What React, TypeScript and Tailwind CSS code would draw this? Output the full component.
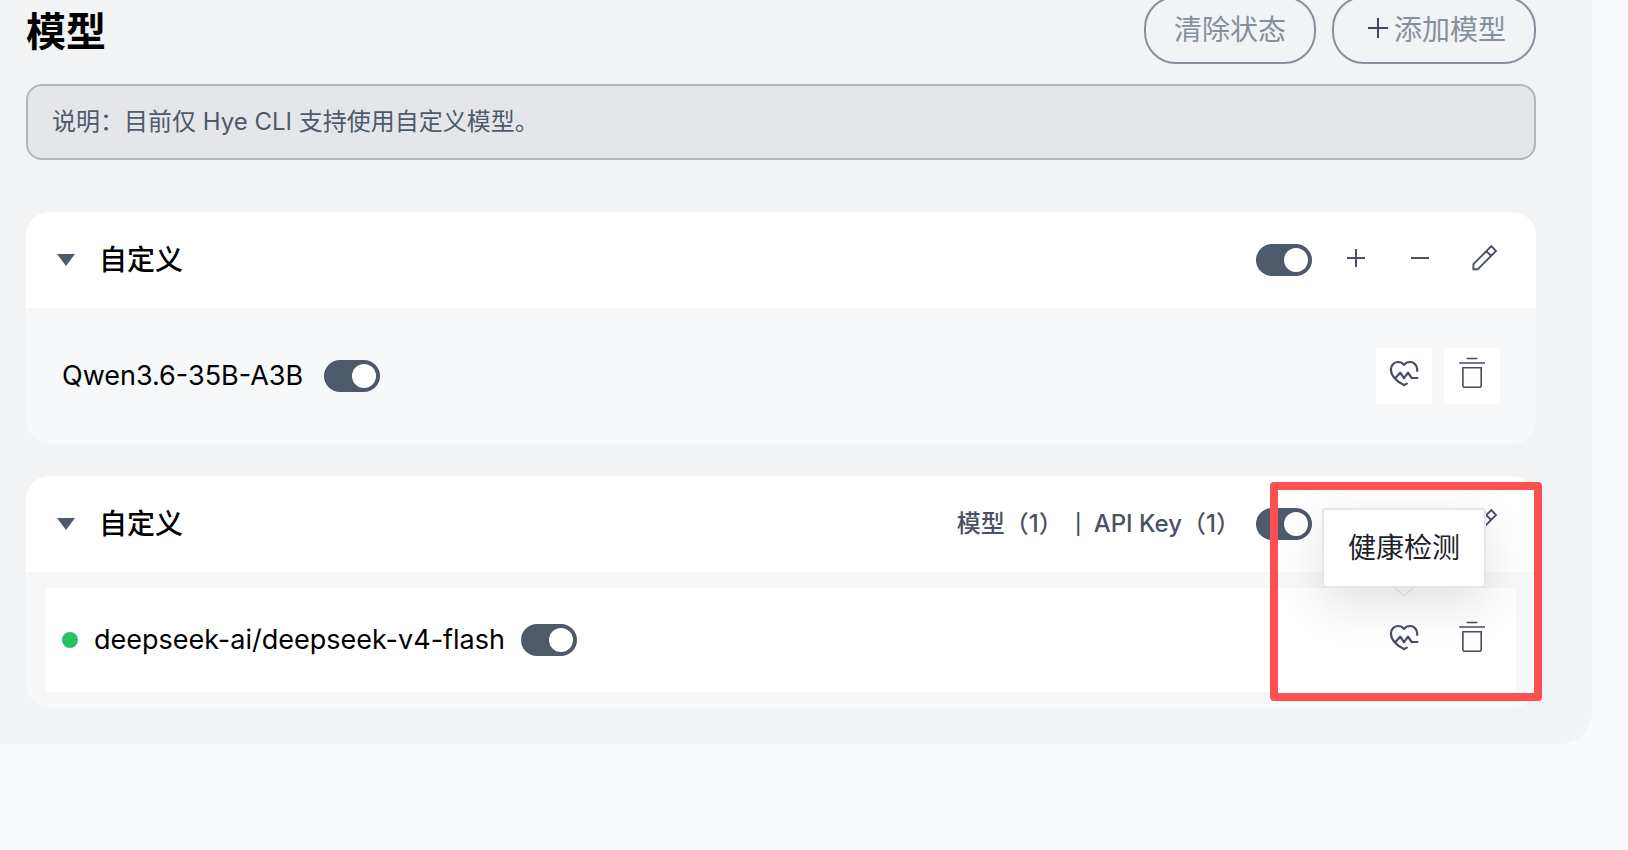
import { useState } from 'react';
import type { ReactNode } from 'react';

interface Model {
  id: string;
  name: string;
  healthy?: boolean;
}

interface Provider {
  id: string;
  title: string;
  keyCount?: number;
  models: Model[];
}

const providers: Provider[] = [
  {
    id: 'custom-1',
    title: '自定义',
    models: [{ id: 'qwen', name: 'Qwen3.6-35B-A3B' }],
  },
  {
    id: 'custom-2',
    title: '自定义',
    keyCount: 1,
    models: [{ id: 'deepseek', name: 'deepseek-ai/deepseek-v4-flash', healthy: true }],
  },
];

function Icon({ children, width = 2 }: { children: ReactNode; width?: number }) {
  return (
    <svg
      className="size-10 shrink-0"
      viewBox="-4 -4 40 40"
      fill="none"
      stroke="currentColor"
      strokeWidth={width}
      aria-hidden="true"
    >
      {children}
    </svg>
  );
}

function PlusIcon() {
  return (
    <Icon>
      <path d="M7 14h18M16 5v18" />
    </Icon>
  );
}

function MinusIcon() {
  return (
    <Icon>
      <path d="M7 14h18" />
    </Icon>
  );
}

function EditIcon() {
  return (
    <Icon width={1.9}>
      <path d="M23.3 2.2 28 7 9.7 25.3H5.4v-5.1zM18.3 7.1l4.9 4.9" />
    </Icon>
  );
}

function HealthIcon() {
  return (
    <Icon>
      <path
        d="M29.2 11V9.6C29.2 5.2 26 2 22.2 2 19.6 2 17.4 3 16 4.900 14.6 3 12.400 2 9.800 2 6 2 2.900 5.200 2.900 9.600c0 6.400 6.200 12.400 13.100 15.500 1.200-.4 2-.8 2.800-1.400"
        strokeWidth="2.200"
        strokeLinecap="round"
        strokeLinejoin="round"
      />
      <path d="M7 18.500l5.200-5.800 3.800 5.400 4-5.400 3.700 5.300H30.300" strokeWidth="2.200" strokeLinejoin="round" />
    </Icon>
  );
}

function TrashIcon() {
  return (
    <Icon width={1.6}>
      <path d="M10.700-1.500h10.600M3.200 3h25.700M6.900 7.700h18.300v17.600a2 2 0 0 1-2 2H8.900a2 2 0 0 1-2-2z" />
    </Icon>
  );
}

function Toggle({ label }: { label: string }) {
  const [on, setOn] = useState(true);
  return (
    <input
      type="checkbox"
      role="switch"
      aria-label={label}
      checked={on}
      onChange={() => setOn(!on)}
      className="h-8 w-14 shrink-0 cursor-pointer appearance-none rounded-full bg-[#c9cdd4] p-1 before:block before:size-6 before:rounded-full before:bg-white checked:bg-[#4e5969] checked:before:translate-x-6"
    />
  );
}

function HeaderButton({ label, children }: { label: string; children: ReactNode }) {
  return (
    <button type="button" aria-label={label} className="flex size-12 items-center justify-center text-[#4b5066]">
      {children}
    </button>
  );
}

function RowButton({ label, children }: { label: string; children: ReactNode }) {
  return (
    <button
      type="button"
      aria-label={label}
      className="flex size-14 items-center justify-center rounded bg-white text-[#474c62]"
    >
      {children}
    </button>
  );
}

function Tooltip({ text }: { text: string }) {
  return (
    <div
      role="tooltip"
      className="absolute bottom-full left-1/2 mb-6 -translate-x-1/2 rounded border-2 border-[#e5e6eb] bg-white px-6 py-4 shadow-[0_16px_48px_rgba(0,0,0,0.12)]"
    >
      <span className="block whitespace-nowrap text-[28px] leading-11 text-[#1d2129]">{text}</span>
      <svg
        className="absolute top-full left-1/2 h-3 w-6 -translate-x-1/2"
        viewBox="0 0 24 12"
        fill="none"
        stroke="#d9dade"
        strokeWidth="2"
        aria-hidden="true"
      >
        <path d="M1 0l9.500 8.500q1.500 1.200 3 0L23 0" />
      </svg>
    </div>
  );
}

function ModelRow({ model }: { model: Model }) {
  return (
    <div className={`flex h-26 items-center justify-between px-4 ${model.healthy ? 'bg-white' : ''}`}>
      <div className="flex items-center gap-4">
        {model.healthy && <span className="size-4 rounded-full bg-[#22c55e]" />}
        <span className="min-w-[246px] text-[27px] leading-11 text-black">{model.name}</span>
        <Toggle label={model.name} />
      </div>
      <div className="flex items-center gap-3">
        <div className="relative">
          <RowButton label="健康检测">
            <HealthIcon />
          </RowButton>
          {model.healthy && <Tooltip text="健康检测" />}
        </div>
        <RowButton label="删除">
          <TrashIcon />
        </RowButton>
      </div>
    </div>
  );
}

function ProviderCard({ provider }: { provider: Provider }) {
  return (
    <section className="relative rounded-3xl bg-[#f7f8fa]">
      <header className="flex h-24 items-center justify-between rounded-t-3xl bg-white pr-7 pl-[31px]">
        <button type="button" className="flex items-center gap-6">
          <svg className="h-3 w-[18px] text-[#4e5969]" viewBox="0 0 18 12" fill="currentColor" aria-hidden="true">
            <path d="M0 0h18L9 12z" />
          </svg>
          <span className="text-[28px] leading-11 font-medium text-black">{provider.title}</span>
        </button>
        <div className="flex items-center gap-5">
          <div className="flex items-center gap-4">
            {provider.keyCount !== undefined && (
              <p className="flex items-center gap-3 text-2xl font-medium text-[#4b5066]">
                <span>模型（{provider.models.length}）</span>
                <span className="text-xl">|</span>
                <span>API Key（{provider.keyCount}）</span>
              </p>
            )}
            <Toggle label={provider.title} />
          </div>
          <div className="flex items-center gap-4">
            <HeaderButton label="添加">
              <PlusIcon />
            </HeaderButton>
            <HeaderButton label="移除">
              <MinusIcon />
            </HeaderButton>
            <HeaderButton label="编辑">
              <EditIcon />
            </HeaderButton>
          </div>
        </div>
      </header>
      <div className="px-5 py-4">
        {provider.models.map((model) => (
          <ModelRow key={model.id} model={model} />
        ))}
      </div>
      {provider.keyCount !== undefined && (
        <div className="pointer-events-none absolute top-1.5 -right-1.5 h-[219px] w-[272px] rounded border-8 border-[#fc5150]" />
      )}
    </section>
  );
}

export default function App() {
  return (
    <div className="min-h-screen overflow-hidden bg-[#f9fafc] font-['Inter','Noto_Sans_CJK_SC',sans-serif]">
      <main className="mr-9 rounded-br-[32px] bg-[#f1f3f5] pr-14 pb-9 pl-[26px]">
        <div className="-mt-1 flex h-17 items-center justify-between">
          <h1 className="pt-1 text-[40px] leading-14 font-semibold text-black">模型</h1>
          <div className="flex gap-4">
            <button
              type="button"
              className="h-17 rounded-[32px] border-2 border-[#86909c] px-7 text-[28px] leading-11 text-[#86909c]"
            >
              清除状态
            </button>
            <button
              type="button"
              className="flex h-17 items-center rounded-[32px] border-2 border-[#86909c] px-7 text-[28px] leading-11 text-[#86909c]"
            >
              <svg className="size-8 text-[#42465c]" viewBox="0 0 32 32" stroke="currentColor" strokeWidth="2" aria-hidden="true">
                <path d="M6 14h20M16 4v20" />
              </svg>
              添加模型
            </button>
          </div>
        </div>

        <p className="mt-5 rounded-2xl border-2 border-[#b1b7be] bg-[#e5e6ea] px-6 py-5 text-2xl text-[#4e5969]">
          说明：目前仅 Hye CLI 支持使用自定义模型。
        </p>

        <div className="mt-13 flex flex-col gap-8">
          {providers.map((provider) => (
            <ProviderCard key={provider.id} provider={provider} />
          ))}
        </div>
      </main>
    </div>
  );
}
